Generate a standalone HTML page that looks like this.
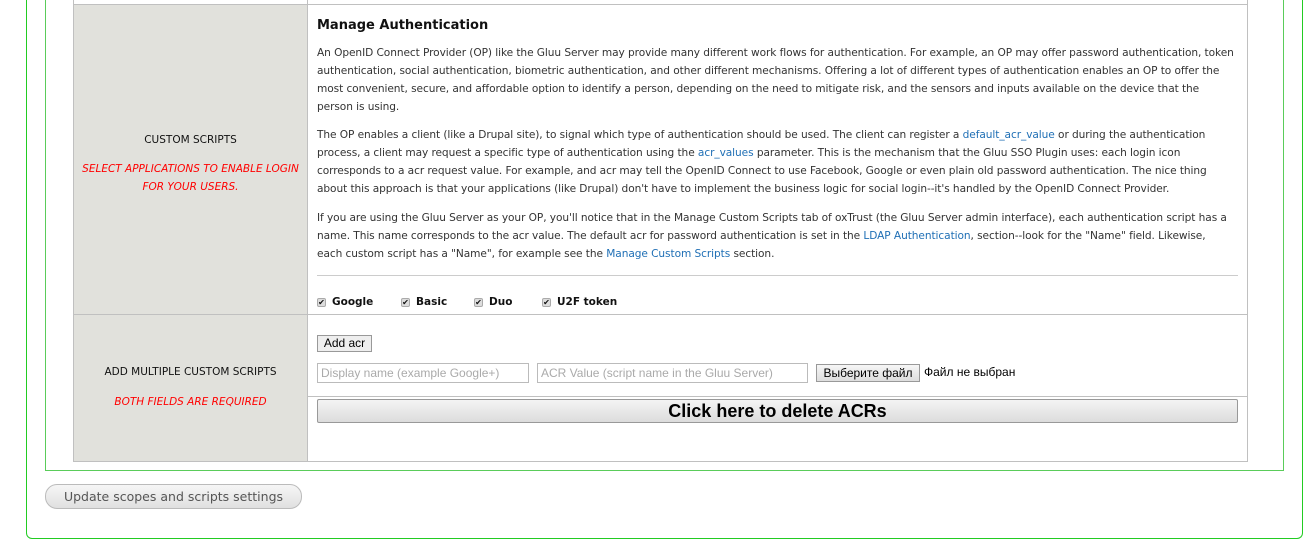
<!DOCTYPE html>
<html><head><meta charset="utf-8"><style>
*{margin:0;padding:0;box-sizing:border-box}
body{width:1316px;height:548px;background:#fff;position:relative;overflow:hidden;font-family:"DejaVu Sans",sans-serif;color:#333}
.a{position:absolute}
.l{position:absolute;left:317px;font-size:10.6px;white-space:nowrap;letter-spacing:-0.08px;color:#333}
a{color:#1f6fb5;text-decoration:none}
.c{position:absolute;left:73px;width:235px;text-align:center;font-size:10.5px;white-space:nowrap;color:#111}
.r{color:#f00;font-style:italic}
.cb{position:absolute;top:296px;font-size:10.5px;font-weight:bold;color:#111}
.cb i{display:inline-block;width:9px;height:9px;border:1px solid #aaa;background:#ddd;border-radius:2px;margin-right:6px;font-style:normal;font-size:8px;line-height:8px;text-align:center;vertical-align:0}
</style></head><body>
<div class="a" style="left:26px;top:-10px;width:1277px;height:549px;border:1px solid #22cc22;border-top:none;border-radius:0 0 6px 6px"></div>
<div class="a" style="left:45px;top:-10px;width:1239px;height:481px;border:1px solid #5acc5a;border-top:none"></div>
<div class="a" style="left:73px;top:-10px;width:1175px;height:472px;border:1px solid #c0c0c0;border-top:none"></div>
<div class="a" style="left:74px;top:5px;width:233px;height:456px;background:#e1e1dc"></div>
<div class="a" style="left:73px;top:4px;width:1175px;height:1px;background:#c0c0c0"></div>
<div class="a" style="left:307px;top:-10px;width:1px;height:471px;background:#c0c0c0"></div>
<div class="a" style="left:73px;top:314px;width:1175px;height:1px;background:#c0c0c0"></div>
<div class="a" style="left:308px;top:396px;width:940px;height:1px;background:#c0c0c0"></div>
<div class="a" style="left:317px;top:275px;width:921px;height:1px;background:#ccc"></div>

<div class="c" style="top:134px">CUSTOM SCRIPTS</div>
<div class="c r" style="top:163px">SELECT APPLICATIONS TO ENABLE LOGIN</div>
<div class="c r" style="top:181px">FOR YOUR USERS.</div>
<div class="c" style="top:366px">ADD MULTIPLE CUSTOM SCRIPTS</div>
<div class="c r" style="top:396px">BOTH FIELDS ARE REQUIRED</div>

<div class="l" style="top:18px;font-size:13px;font-weight:bold;color:#111;letter-spacing:0">Manage Authentication</div>
<div class="l" style="top:47px">An OpenID Connect Provider (OP) like the Gluu Server may provide many different work flows for authentication. For example, an OP may offer password authentication, token</div>
<div class="l" style="top:65px">authentication, social authentication, biometric authentication, and other different mechanisms. Offering a lot of different types of authentication enables an OP to offer the</div>
<div class="l" style="top:83px">most convenient, secure, and affordable option to identify a person, depending on the need to mitigate risk, and the sensors and inputs available on the device that the</div>
<div class="l" style="top:101px">person is using.</div>
<div class="l" style="top:129px">The OP enables a client (like a Drupal site), to signal which type of authentication should be used. The client can register a <a>default_acr_value</a> or during the authentication</div>
<div class="l" style="top:147px">process, a client may request a specific type of authentication using the <a>acr_values</a> parameter. This is the mechanism that the Gluu SSO Plugin uses: each login icon</div>
<div class="l" style="top:165px">corresponds to a acr request value. For example, and acr may tell the OpenID Connect to use Facebook, Google or even plain old password authentication. The nice thing</div>
<div class="l" style="top:183px">about this approach is that your applications (like Drupal) don't have to implement the business logic for social login--it's handled by the OpenID Connect Provider.</div>
<div class="l" style="top:212px">If you are using the Gluu Server as your OP, you'll notice that in the Manage Custom Scripts tab of oxTrust (the Gluu Server admin interface), each authentication script has a</div>
<div class="l" style="top:230px">name. This name corresponds to the acr value. The default acr for password authentication is set in the <a>LDAP Authentication</a>, section--look for the "Name" field. Likewise,</div>
<div class="l" style="top:248px">each custom script has a "Name", for example see the <a>Manage Custom Scripts</a> section.</div>

<div class="cb" style="left:317px"><i>✔</i>Google</div>
<div class="cb" style="left:401px"><i>✔</i>Basic</div>
<div class="cb" style="left:474px"><i>✔</i>Duo</div>
<div class="cb" style="left:542px"><i>✔</i>U2F token</div>

<div class="a" style="left:317px;top:335px;width:55px;height:17px;border:1px solid #999;background:#eee;font:12px 'Liberation Sans',sans-serif;color:#000;text-align:center;line-height:15px">Add acr</div>
<div class="a" style="left:317px;top:363px;width:212px;height:20px;border:1px solid #bbb;font:12px 'Liberation Sans',sans-serif;color:#aaa;padding-left:3px;line-height:18px">Display name (example Google+)</div>
<div class="a" style="left:537px;top:363px;width:271px;height:20px;border:1px solid #bbb;font:12px 'Liberation Sans',sans-serif;color:#aaa;padding-left:3px;line-height:18px">ACR Value (script name in the Gluu Server)</div>
<div class="a" style="left:816px;top:364px;width:104px;height:18px;border:1px solid #999;background:linear-gradient(#f6f6f6,#ddd);font:12px 'Liberation Sans',sans-serif;color:#000;text-align:center;line-height:16px">Выберите файл</div>
<div class="a" style="left:924px;top:365px;font:12px 'Liberation Sans',sans-serif;color:#000">Файл не выбран</div>
<div class="a" style="left:317px;top:399px;width:921px;height:24px;border:1px solid #999;border-radius:2px;background:linear-gradient(#f4f4f4,#dcdcdc);font:bold 18px 'Liberation Sans',sans-serif;color:#000;text-align:center;line-height:22px">Click here to delete ACRs</div>

<div class="a" style="left:45px;top:484px;width:257px;height:25px;border:1px solid #bbb;border-radius:12px;background:linear-gradient(#f6f6f6,#e0e0e0);font-size:12.5px;color:#555;text-align:center;line-height:23px">Update scopes and scripts settings</div>
</body></html>
